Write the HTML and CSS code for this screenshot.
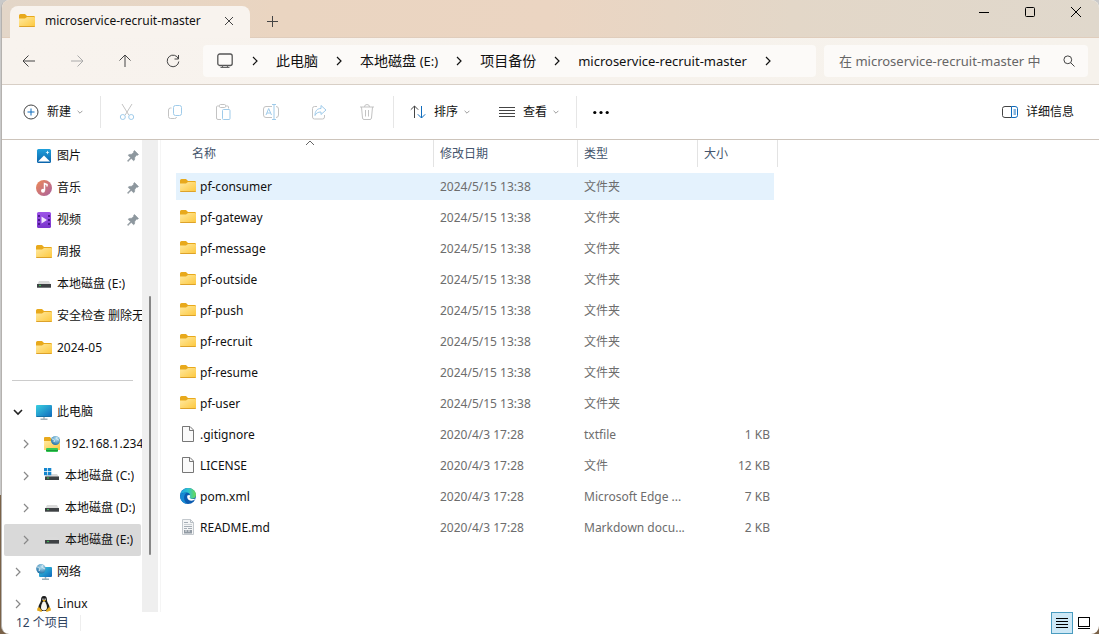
FILE: index.html
```html
<!DOCTYPE html>
<html lang="zh-CN">
<head>
<meta charset="utf-8">
<title>microservice-recruit-master</title>
<link rel="stylesheet" href="styles.css">
</head>
<body>
<svg class="defs" aria-hidden="true">
  <defs>
    <linearGradient id="gFolder" x1="0" y1="0" x2="1" y2="1"><stop offset="0" stop-color="#ffe9a0"/><stop offset="1" stop-color="#fdc73b"/></linearGradient>
    <linearGradient id="gBlue" x1="0" y1="0" x2="1" y2="1"><stop offset="0" stop-color="#3ad0e0"/><stop offset="1" stop-color="#0f68bd"/></linearGradient>
    <linearGradient id="gPic" x1="0" y1="0" x2="0" y2="1"><stop offset="0" stop-color="#1fa0dc"/><stop offset="1" stop-color="#0b63ab"/></linearGradient>
    <linearGradient id="gMusic" x1="0" y1="0" x2="1" y2="1"><stop offset="0" stop-color="#ef8a55"/><stop offset="1" stop-color="#a8609f"/></linearGradient>
    <linearGradient id="gVideo" x1="0" y1="0" x2="0" y2="1"><stop offset="0" stop-color="#9d54e8"/><stop offset="1" stop-color="#7a35cc"/></linearGradient>
    <linearGradient id="gEdge" x1="0" y1="0" x2="1" y2="0"><stop offset="0" stop-color="#1d9fe0"/><stop offset=".5" stop-color="#2ec3cf"/><stop offset="1" stop-color="#6bdc52"/></linearGradient>
    <radialGradient id="gGlobe" cx=".6" cy=".3" r=".7"><stop offset="0" stop-color="#bfe6f5"/><stop offset="1" stop-color="#2273a8"/></radialGradient>
  </defs>
  <symbol id="folder" viewBox="0 0 16 16"><path d="M0 2.500Q0 1 1.500 1H6l2 2h6.500Q16 3 16 4v2H0z" fill="#e8a91c"/><path d="M0 5.500h6L8 4h7q1 0 1 1v8q0 1-1 1H1q-1 0-1-1z" fill="url(#gFolder)"/><path d="M.3 13.500h15.400" stroke="#dda22a"/></symbol>
  <symbol id="file" viewBox="0 0 16 16"><path d="M2.500.500h7.500l3.500 3.500v11.500h-11z" fill="#fafafa" stroke="#777"/><path d="M9.500.500V4.500h4" fill="none" stroke="#777"/></symbol>
  <symbol id="md" viewBox="0 0 16 16"><path d="M2.500.500h8l3 3v12h-11z" fill="#f4f5f6" stroke="#c3c8cd"/><path d="M10.500.500v3h3" fill="none" stroke="#b8bec4"/><path d="M4 3.500h4M4 7.500h8M4 9.500h3m1 0h4" stroke="#a5adb5"/><path d="M4 5.500h8" stroke="#ccd1d5"/><rect x="4" y="11" width="8" height="3.500" fill="#929ba4"/><path d="M6 11v2m3-2v2" stroke="#e6e8ea"/></symbol>
  <symbol id="edge" viewBox="0 0 16 16"><circle cx="8" cy="8" r="8" fill="#0b5bb0"/><path d="M.2 7C.8 3 4 0 8 0c5 0 8 3.500 8 6.800 0 2.700-2 4-4 4-2.200 0-3-1-2.200-2C10.800 6 8.500 4.600 6.200 4.600 3 4.600.8 6 .2 7z" fill="url(#gEdge)"/><path d="M.1 8C1 5 4.500 4.300 6.500 5c-3 1.700-3.600 7 .5 10.900C3 15.500 0 12 .1 8z" fill="#178ad3"/><path d="M7.400 7.600c-.9 2.500 1 5.200 4 5.100 1.500 0 2.800-.6 3.800-1.400.3-.2.500-.1.300-.8-1.200.5-2.500.7-3.700.5-2-.3-2.500-1.300-1.900-2.200.6-.8.200-1.900-.7-1.900-.8 0-1.500.2-1.800.7z" fill="#fff"/></symbol>
  <symbol id="drive" viewBox="0 0 16 16"><path d="M3 5h10l2 4H1z" fill="#dadada"/><path d="M1 8h14v4H1z" fill="#3e4144"/><path d="M1 11.500h14" stroke="#747779"/><circle cx="4" cy="9.500" r=".8" fill="#3be25a"/></symbol>
  <symbol id="drivec" viewBox="0 0 16 16"><path d="M3 6h10l2 3H1z" fill="#dadada"/><path d="M1 8.500h14V12H1z" fill="#3e4144"/><circle cx="4" cy="10" r=".8" fill="#3be25a"/><path d="M0 0h3.300v3.300H0zM4 0h3.300v3.300H4zM0 4h3.300v3.300H0zM4 4h3.300v3.300H4z" fill="#1486cf"/></symbol>
  <symbol id="picture" viewBox="0 0 16 16"><rect x="1" y="1" width="14" height="14" rx="1.500" fill="url(#gPic)"/><path d="M2 13.500L8 7.500l6 6z" fill="#fff"/><path d="M11.500 2.500l.6 1.400 1.400.6-1.400.6-.6 1.400-.6-1.400-1.400-.6 1.400-.6z" fill="#e9f8ff"/></symbol>
  <symbol id="music" viewBox="0 0 16 16"><circle cx="8" cy="8" r="8" fill="url(#gMusic)"/><path d="M8.500 10.500V3.500l2.500 1V6.500" fill="none" stroke="#fff" stroke-width="1.500"/><circle cx="7" cy="10.800" r="2" fill="#fff"/></symbol>
  <symbol id="video" viewBox="0 0 16 16"><rect x="1" y="0" width="14" height="16" rx="1.500" fill="url(#gVideo)"/><path d="M5.500 4.500v7l5.500-3.500z" fill="#f1e6ff"/><path d="M3 3v11M13 3v11" stroke="#4c188c" stroke-width="2" stroke-dasharray="2 2"/></symbol>
  <symbol id="pc" viewBox="0 0 16 16"><path d="M8 12v3M4.500 15.200h7" stroke="#a4b1b9" stroke-width="1.500"/><rect x="0" y="1" width="16" height="12" rx="1" fill="url(#gBlue)"/><path d="M.5 12.500h15" stroke="#1470a6"/></symbol>
  <symbol id="ftp" viewBox="0 0 16 16"><path d="M0 2q0-1 1-1h5l1.500 2H16v3H0z" fill="#e8a91c"/><path d="M0 5h16v9H0z" fill="url(#gFolder)"/><circle cx="11.500" cy="4.500" r="4.500" fill="url(#gGlobe)"/><path d="M8 3c2 0 3 1 2 3m3-5c-1 2 1 3 2 3" stroke="#deeef3" fill="none"/><rect x="2" y="12" width="12" height="4" rx="1" fill="#36c954"/><path d="M2 14.500h12" stroke="#189c37"/></symbol>
  <symbol id="network" viewBox="0 0 16 16"><path d="M9.500 13v2M6 15.300h7" stroke="#9bafb9" stroke-width="1.500"/><rect x="3" y="3" width="13" height="10" rx="1" fill="url(#gBlue)"/><circle cx="5" cy="4.800" r="4.800" fill="url(#gGlobe)"/><path d="M1 3c2 0 4 1 2 4m4-6c-2 2 0 3 2 4" stroke="#dcecf2" fill="none"/></symbol>
  <symbol id="tux" viewBox="0 0 16 16"><path d="M8 0c2.500 0 3 2 3 4.500 0 2 2.700 4 2.700 7.500L11 15H5l-2.700-3C2.300 8.500 5 6.500 5 4.500 5 2 5.500 0 8 0z" fill="#1c1c1c"/><path d="M8 5c2 1.500 3 4 3 6.500 0 2-1.300 3-3 3s-3-1-3-3C5 9 6 6.500 8 5z" fill="#f6f4ef"/><path d="M6.500 2.500h1v1.500h-1zM8.600 2.500h1v1.500h-1z" fill="#fff"/><path d="M6.200 4.500L8 3.800l2 .7L8 5.700zM3 11l3 3.500-.5 1.500L1 14.500 1.500 12zM13 11l-3 3.500.5 1.500 4.500-1.500-.5-2.500z" fill="#e5aa1d"/></symbol>
  <symbol id="pin" viewBox="0 0 12 12"><path d="M7.500.500l4 4-.8.800-1-.2L7.800 7.300 7.500 10l-.9.800L4.200 8.400 1 11.500l-.6-.6L3.500 7.700 1.200 5.300 2 4.500l2.700-.3L6.800 2.200l-.1-1z" fill="#8d979e" stroke="#8d979e" stroke-width=".6"/></symbol>
  <symbol id="right" viewBox="0 0 10 10"><path d="M3 1l4 4-4 4" fill="none" stroke="currentColor" stroke-width="1.200"/></symbol>
  <symbol id="down" viewBox="0 0 10 10"><path d="M1 3l4 4 4-4" fill="none" stroke="currentColor" stroke-width="1.600"/></symbol>
</svg>

<div class="window">
  <header class="tabs">
    <div class="tab">
      <svg class="ico"><use href="#folder"/></svg>
      <span class="tab-title">microservice-recruit-master</span>
      <button class="plain" aria-label="关闭标签页"><svg width="10" height="10" viewBox="0 0 10 10" class="line"><path d="M1 1l8 8M9 1L1 9"/></svg></button>
    </div>
    <button class="plain new-tab" aria-label="新标签页"><svg width="11" height="11" viewBox="0 0 11 11" class="line"><path d="M5.500 0v11M0 5.500h11"/></svg></button>
    <div class="caption">
      <button class="plain" aria-label="最小化"><svg width="12" height="12" viewBox="0 0 12 12" class="line black"><path d="M1 6.500h10"/></svg></button>
      <button class="plain" aria-label="最大化"><svg width="12" height="12" viewBox="0 0 12 12" class="line black"><rect x="1.500" y="1.500" width="9" height="9" rx="1"/></svg></button>
      <button class="plain" aria-label="关闭"><svg width="12" height="12" viewBox="0 0 12 12" class="line black"><path d="M1 1l10 10M11 1L1 11"/></svg></button>
    </div>
  </header>

  <nav class="navbar">
    <div class="nav-buttons">
      <button class="plain" aria-label="后退"><svg width="14" height="14" viewBox="0 0 14 14" class="line"><path d="M6.500 1.500L1 7l5.500 5.500M1 7h12"/></svg></button>
      <button class="plain" aria-label="前进" disabled><svg width="14" height="14" viewBox="0 0 14 14" class="line dim"><path d="M7.500 1.500L13 7l-5.500 5.500M13 7H1"/></svg></button>
      <button class="plain" aria-label="向上"><svg width="14" height="14" viewBox="0 0 14 14" class="line"><path d="M1.500 6.500L7 1l5.500 5.500M7 1v12"/></svg></button>
      <button class="plain" aria-label="刷新"><svg width="14" height="14" viewBox="0 0 14 14" class="line"><path d="M12.500 5A5.800 5.800 0 1 0 12.800 7.500M12.500 1v4h-4"/></svg></button>
    </div>
    <div class="address">
      <svg class="monitor" width="16" height="16" viewBox="0 0 16 16"><rect x=".8" y="1" width="14.400" height="11.500" rx="2" fill="none" stroke="#555" stroke-width="1.300"/><path d="M5.500 12.500v2m5-2v2M3.500 14.500h9" fill="none" stroke="#666" stroke-width="1.200"/></svg>
      <svg class="sep"><use href="#right"/></svg>
      <a href="#">此电脑</a>
      <svg class="sep"><use href="#right"/></svg>
      <a href="#">本地磁盘 <span class="latin">(E:)</span></a>
      <svg class="sep"><use href="#right"/></svg>
      <a href="#">项目备份</a>
      <svg class="sep"><use href="#right"/></svg>
      <a href="#" class="latin">microservice-recruit-master</a>
      <svg class="sep"><use href="#right"/></svg>
    </div>
    <label class="search">
      <input type="text" aria-label="搜索" placeholder="在 microservice-recruit-master 中">
      <svg width="12" height="12" viewBox="0 0 12 12" class="line"><circle cx="4.800" cy="4.800" r="3.900"/><path d="M7.700 7.700l3.800 3.800"/></svg>
    </label>
  </nav>

  <div class="toolbar">
    <button class="plain tool"><svg width="16" height="16" viewBox="0 0 16 16" class="line"><circle cx="8" cy="8" r="7"/><path d="M8 4.500v7M4.500 8h7" stroke="#0f6cbd"/></svg><span>新建</span><svg class="caret"><use href="#down"/></svg></button>
    <div class="group icons">
      <button class="plain" aria-label="剪切" disabled><svg width="16" height="16" viewBox="0 0 16 16" class="line pale"><path d="M3 0l6.800 11M13 0L6.200 11"/><g class="sky"><circle cx="3.800" cy="13" r="2.500"/><circle cx="12.200" cy="13" r="2.500"/></g></svg></button>
      <button class="plain" aria-label="复制" disabled><svg width="16" height="16" viewBox="0 0 16 16" class="line pale"><path d="M4.500 4H3.500Q1.500 4 1.500 6v6.500q0 2 2 2h4q2 0 2-1.500"/><rect x="6.500" y="1.500" width="8" height="10" rx="2" class="sky"/></svg></button>
      <button class="plain" aria-label="粘贴" disabled><svg width="16" height="16" viewBox="0 0 16 16" class="line pale"><path d="M4.500 2H2.500q-1 0-1 1v11q0 1.500 1.500 1.500h3M10.500 2h2q1 0 1 1v1.500"/><rect x="4.500" y=".5" width="6" height="3" rx="1"/><rect x="7.500" y="5.500" width="7.500" height="10" rx="1" class="sky"/></svg></button>
      <button class="plain" aria-label="重命名" disabled><svg width="16" height="16" viewBox="0 0 16 16" class="line pale"><path d="M9 2.500H3q-2.500 0-2.500 2.500v6q0 2.500 2.500 2.500h6M13 2.500q2.500 0 2.500 2.500v6q0 2.500-2.500 2.500"/><path d="M3 11L5.700 4.500 8.500 11M4 9h3.500M9 .5h4M9 15.500h4M11 .5v15" class="sky"/></svg></button>
      <button class="plain" aria-label="共享" disabled><svg width="16" height="16" viewBox="0 0 16 16" class="line pale"><path d="M6 2.500H3.500Q1.500 2.500 1.500 4.500v8.500q0 2 2 2h8q2 0 2-2v-2"/><path d="M10 1.500l5 4.500-5 4.500V8C7 8 5 9 4 11.500 4 7 6 4.500 10 4.500z" class="sky"/></svg></button>
      <button class="plain" aria-label="删除" disabled><svg width="16" height="16" viewBox="0 0 16 16" class="line pale"><path d="M1 3h14M5.500 3Q5.500.5 8 .5T10.500 3M2.500 3l1 11q.2 1.500 1.500 1.500h6q1.300 0 1.500-1.500l1-11M6.500 6v6.500M9.500 6v6.500"/></svg></button>
    </div>
    <div class="group">
      <button class="plain tool"><svg width="16" height="16" viewBox="0 0 16 16" class="line"><path d="M4.500 14V2M.8 5.700L4.500 2l3.700 3.700"/><path d="M11.500 2v12M7.800 10.300l3.700 3.700 3.700-3.700" stroke="#0f6cbd"/></svg><span>排序</span><svg class="caret"><use href="#down"/></svg></button>
      <button class="plain tool"><svg width="16" height="16" viewBox="0 0 16 16" class="line"><path d="M0 3.500h16M0 6.500h16M0 9.500h16M0 12.500h16"/></svg><span>查看</span><svg class="caret"><use href="#down"/></svg></button>
    </div>
    <div class="group">
      <button class="plain" aria-label="更多"><svg width="16" height="16" viewBox="0 0 16 16"><circle cx="1.800" cy="8.500" r="1.600"/><circle cx="8" cy="8.500" r="1.600"/><circle cx="14.200" cy="8.500" r="1.600"/></svg></button>
    </div>
    <button class="plain tool details"><svg width="16" height="16" viewBox="0 0 16 16" class="line"><path d="M9.500 2.500H3q-2.500 0-2.500 2v7q0 2 2.500 2h6.500"/><path d="M9.500 2.500h3.500q2.500 0 2.500 2v7q0 2-2.500 2H9.500zM11.500 6h2.500M11.500 8h2.500M11.500 10h2.500" stroke="#0f6cbd"/></svg><span>详细信息</span></button>
  </div>

  <main class="body">
    <aside class="side">
      <a href="#" class="item"><svg class="ico"><use href="#picture"/></svg><span>图片</span><svg class="pin"><use href="#pin"/></svg></a>
      <a href="#" class="item"><svg class="ico"><use href="#music"/></svg><span>音乐</span><svg class="pin"><use href="#pin"/></svg></a>
      <a href="#" class="item"><svg class="ico"><use href="#video"/></svg><span>视频</span><svg class="pin"><use href="#pin"/></svg></a>
      <a href="#" class="item"><svg class="ico"><use href="#folder"/></svg><span>周报</span></a>
      <a href="#" class="item"><svg class="ico"><use href="#drive"/></svg><span>本地磁盘 (E:)</span></a>
      <a href="#" class="item"><svg class="ico"><use href="#folder"/></svg><span>安全检查 删除无</span></a>
      <a href="#" class="item"><svg class="ico"><use href="#folder"/></svg><span>2024-05</span></a>
      <hr class="rule">
      <a href="#" class="item tree"><svg class="exp open"><use href="#down"/></svg><svg class="ico"><use href="#pc"/></svg><span>此电脑</span></a>
      <a href="#" class="item tree sub"><svg class="exp"><use href="#right"/></svg><svg class="ico"><use href="#ftp"/></svg><span>192.168.1.234</span></a>
      <a href="#" class="item tree sub"><svg class="exp"><use href="#right"/></svg><svg class="ico"><use href="#drivec"/></svg><span>本地磁盘 (C:)</span></a>
      <a href="#" class="item tree sub"><svg class="exp"><use href="#right"/></svg><svg class="ico"><use href="#drive"/></svg><span>本地磁盘 (D:)</span></a>
      <a href="#" class="item tree sub current"><svg class="exp"><use href="#right"/></svg><svg class="ico"><use href="#drive"/></svg><span>本地磁盘 (E:)</span></a>
      <a href="#" class="item tree"><svg class="exp"><use href="#right"/></svg><svg class="ico"><use href="#network"/></svg><span>网络</span></a>
      <a href="#" class="item tree"><svg class="exp"><use href="#right"/></svg><svg class="ico"><use href="#tux"/></svg><span>Linux</span></a>
    </aside>
    <div class="track"><div class="thumb"></div></div>
    <section class="content">
      <table class="files">
        <colgroup><col class="c-name"><col class="c-date"><col class="c-type"><col class="c-size"></colgroup>
        <thead>
          <tr><th><div class="head">名称<svg class="sort" viewBox="0 0 10 10"><path d="M1 7l4-4 4 4" fill="none" stroke="#666"/></svg></div></th><th><div class="head">修改日期</div></th><th><div class="head">类型</div></th><th><div class="head">大小</div></th></tr>
        </thead>
        <tbody>
          <tr class="hover"><td><svg class="ico"><use href="#folder"/></svg>pf-consumer</td><td>2024/5/15 13:38</td><td>文件夹</td><td></td></tr>
          <tr><td><svg class="ico"><use href="#folder"/></svg>pf-gateway</td><td>2024/5/15 13:38</td><td>文件夹</td><td></td></tr>
          <tr><td><svg class="ico"><use href="#folder"/></svg>pf-message</td><td>2024/5/15 13:38</td><td>文件夹</td><td></td></tr>
          <tr><td><svg class="ico"><use href="#folder"/></svg>pf-outside</td><td>2024/5/15 13:38</td><td>文件夹</td><td></td></tr>
          <tr><td><svg class="ico"><use href="#folder"/></svg>pf-push</td><td>2024/5/15 13:38</td><td>文件夹</td><td></td></tr>
          <tr><td><svg class="ico"><use href="#folder"/></svg>pf-recruit</td><td>2024/5/15 13:38</td><td>文件夹</td><td></td></tr>
          <tr><td><svg class="ico"><use href="#folder"/></svg>pf-resume</td><td>2024/5/15 13:38</td><td>文件夹</td><td></td></tr>
          <tr><td><svg class="ico"><use href="#folder"/></svg>pf-user</td><td>2024/5/15 13:38</td><td>文件夹</td><td></td></tr>
          <tr><td><svg class="ico"><use href="#file"/></svg>.gitignore</td><td>2020/4/3 17:28</td><td>txtfile</td><td>1 KB</td></tr>
          <tr><td><svg class="ico"><use href="#file"/></svg>LICENSE</td><td>2020/4/3 17:28</td><td>文件</td><td>12 KB</td></tr>
          <tr><td><svg class="ico"><use href="#edge"/></svg>pom.xml</td><td>2020/4/3 17:28</td><td>Microsoft Edge ...</td><td>7 KB</td></tr>
          <tr><td><svg class="ico"><use href="#md"/></svg>README.md</td><td>2020/4/3 17:28</td><td>Markdown docu...</td><td>2 KB</td></tr>
        </tbody>
      </table>
    </section>
  </main>

  <footer class="status">
    <span class="count">12 个项目</span>
    <div class="views">
      <button class="plain view active" aria-label="详细信息视图"><svg width="14" height="14" viewBox="0 0 14 14" class="line black"><path d="M1 2.500h12M1 5.500h12M1 8.500h12M1 11.500h12"/></svg></button>
      <button class="plain view" aria-label="大图标视图"><svg width="14" height="14" viewBox="0 0 14 14" class="line black"><rect x="1.500" y="1.500" width="11" height="9"/><path d="M1 12.500h12"/></svg></button>
    </div>
  </footer>
</div>
</body>
</html>
```
FILE: styles.css
```css
* { box-sizing: border-box; }
body {
  margin: 0;
  background: linear-gradient(#c9c9c9 0 78%, #7a6248 78%);
  color: #111;
  font: 12px/16px "Noto Sans", "Noto Sans CJK SC", sans-serif;
}
a { color: inherit; text-decoration: none; }
svg { display: block; flex: none; }
.defs { position: absolute; width: 0; height: 0; }
.line { fill: none; stroke: #444; }
.black { stroke: #000; }
.dim { stroke: #aaa; }
.pale { stroke: #c3c3c3; }
.sky { stroke: #9fcbea; }
.ico { width: 16px; height: 16px; }
.plain {
  display: flex;
  align-items: center;
  justify-content: center;
  padding: 0;
  border: 0;
  background: none;
  color: inherit;
  font: inherit;
}

.window {
  display: flex;
  flex-direction: column;
  height: 100vh;
  margin-left: 1px;
  border-left: 1px solid #b5b2af;
  border-radius: 8px;
  overflow: hidden;
  background: #fff;
}

.tabs {
  display: flex;
  height: 38px;
  padding-left: 8px;
  border-bottom: 1px solid #e0cdbc;
  background: linear-gradient(90deg, #e3d6c8, #ead5c1 25%, #ebd5c2 50%, #e3d7c8 72%, #e0d8cc);
}
.tab {
  display: flex;
  align-items: center;
  width: 240px;
  height: 32px;
  margin-top: 6px;
  padding: 0 16px 2px 9px;
  border-radius: 8px 8px 0 0;
  background: #f8f3ee;
}
.tab-title { flex: 1; margin-left: 10px; }
.new-tab { width: 45px; padding-top: 6px; }
.caption { display: flex; height: 24px; margin-left: auto; }
.caption .plain { width: 46px; }

.navbar {
  display: flex;
  align-items: center;
  height: 47px;
  padding-right: 11px;
  border-bottom: 1px solid #d8cfc6;
  background: linear-gradient(90deg, #f8f3ee, #f6f2ec);
}
.nav-buttons { display: flex; width: 201px; padding-left: 3px; }
.nav-buttons .plain { width: 48px; height: 32px; }
.address {
  display: flex;
  flex: 1;
  align-items: center;
  height: 32px;
  padding-left: 14px;
  border-radius: 4px;
  background: #fcfaf8;
  font-size: 14px;
  white-space: nowrap;
}
.latin { font-size: 13px; }
.address .monitor { margin-right: 17px; }
.address .sep { width: 10px; height: 10px; }
.address a { margin: 0 16px; }
.search {
  display: flex;
  align-items: center;
  width: 264px;
  height: 32px;
  margin-left: 8px;
  padding: 0 13px 0 15px;
  border-radius: 4px;
  background: #fcfaf8;
}
.search input {
  flex: 1;
  min-width: 0;
  padding: 0;
  border: 0;
  outline: 0;
  background: none;
  font: inherit;
  font-size: 13px;
}
.search input::placeholder { color: #666; opacity: 1; }

.toolbar {
  display: flex;
  align-items: center;
  height: 55px;
  padding: 0 25px 0 21px;
  border-bottom: 1px solid #cdc4bb;
}
.tool { gap: 8px; height: 32px; white-space: nowrap; }
.caret { width: 6px; height: 6px; margin-left: -2px; color: #999; }
.group {
  display: flex;
  gap: 29px;
  height: 32px;
  margin-left: 17px;
  padding-left: 16px;
  border-left: 1px solid #e6e6e6;
}
.group.icons { gap: 0; padding-left: 2px; margin-right: -15px; }
.icons .plain { width: 48px; }
.group .plain { height: 32px; }
.details { margin-left: auto; }

.body { display: flex; flex: 1; min-height: 0; }
.side { width: 140px; overflow: hidden; white-space: nowrap; }
.item {
  display: flex;
  align-items: center;
  gap: 5px;
  height: 32px;
  padding-left: 34px;
}
.item span { overflow: hidden; }
.pin { width: 12px; height: 12px; margin: 0 3px 0 auto; }
.rule { height: 1px; margin: 16px 9px 15px 10px; border: 0; background: #ccc; }
.tree { padding-left: 11px; }
.sub { padding-left: 19px; }
.exp { width: 10px; height: 10px; margin-right: 8px; color: #888; }
.exp.open { color: #222; }
.current {
  margin: 0 1px 0 2px;
  padding-left: 17px;
  border-radius: 2px;
  background: #d9d9d9;
}
.track {
  width: 16px;
  padding: 156px 7px 57px;
  background: #efefef;
}
.thumb { width: 2px; height: 100%; border-radius: 1px; background: #868686; }
.content {
  flex: 1;
  margin-left: 2px;
  padding-left: 15px;
  border-left: 1px solid #f5f5f5;
  overflow: hidden;
}

.files { width: 602px; border-collapse: separate; border-spacing: 0; table-layout: fixed; }
.c-name { width: 258px; }
.c-date { width: 144px; }
.c-type { width: 120px; }
.c-size { width: 80px; }
.files th { height: 31px; padding: 0; font-weight: 400; text-align: left; vertical-align: top; }
.head {
  position: relative;
  height: 27px;
  padding-left: 6px;
  border-right: 1px solid #e3e3e3;
  color: #44546c;
  line-height: 27px;
}
th:first-child .head { padding-left: 16px; }
.sort { position: absolute; top: -2px; left: 129px; width: 10px; height: 10px; }
.files td {
  height: 31px;
  padding: 0 6px;
  border: solid transparent;
  border-width: 2px 0;
  background-clip: padding-box;
  color: #6d6d6d;
  white-space: nowrap;
}
.files td:first-child { padding-left: 4px; color: #111; }
.files td:last-child { padding-right: 4px; border-right-width: 4px; text-align: right; }
.files .ico { display: inline-block; margin-right: 4px; vertical-align: -3px; }
.hover td { background-color: #e4f2fd; }

.status { display: flex; align-items: center; height: 22px; padding: 0 4px 0 14px; color: #2f435f; }
.count { padding-right: 11px; border-right: 1px solid #eee; }
.views { display: flex; height: 22px; margin-left: auto; }
.view { width: 22px; height: 22px; }
.view.active { border: 1px solid #4a9cc0; background: #cde8f6; }
```
